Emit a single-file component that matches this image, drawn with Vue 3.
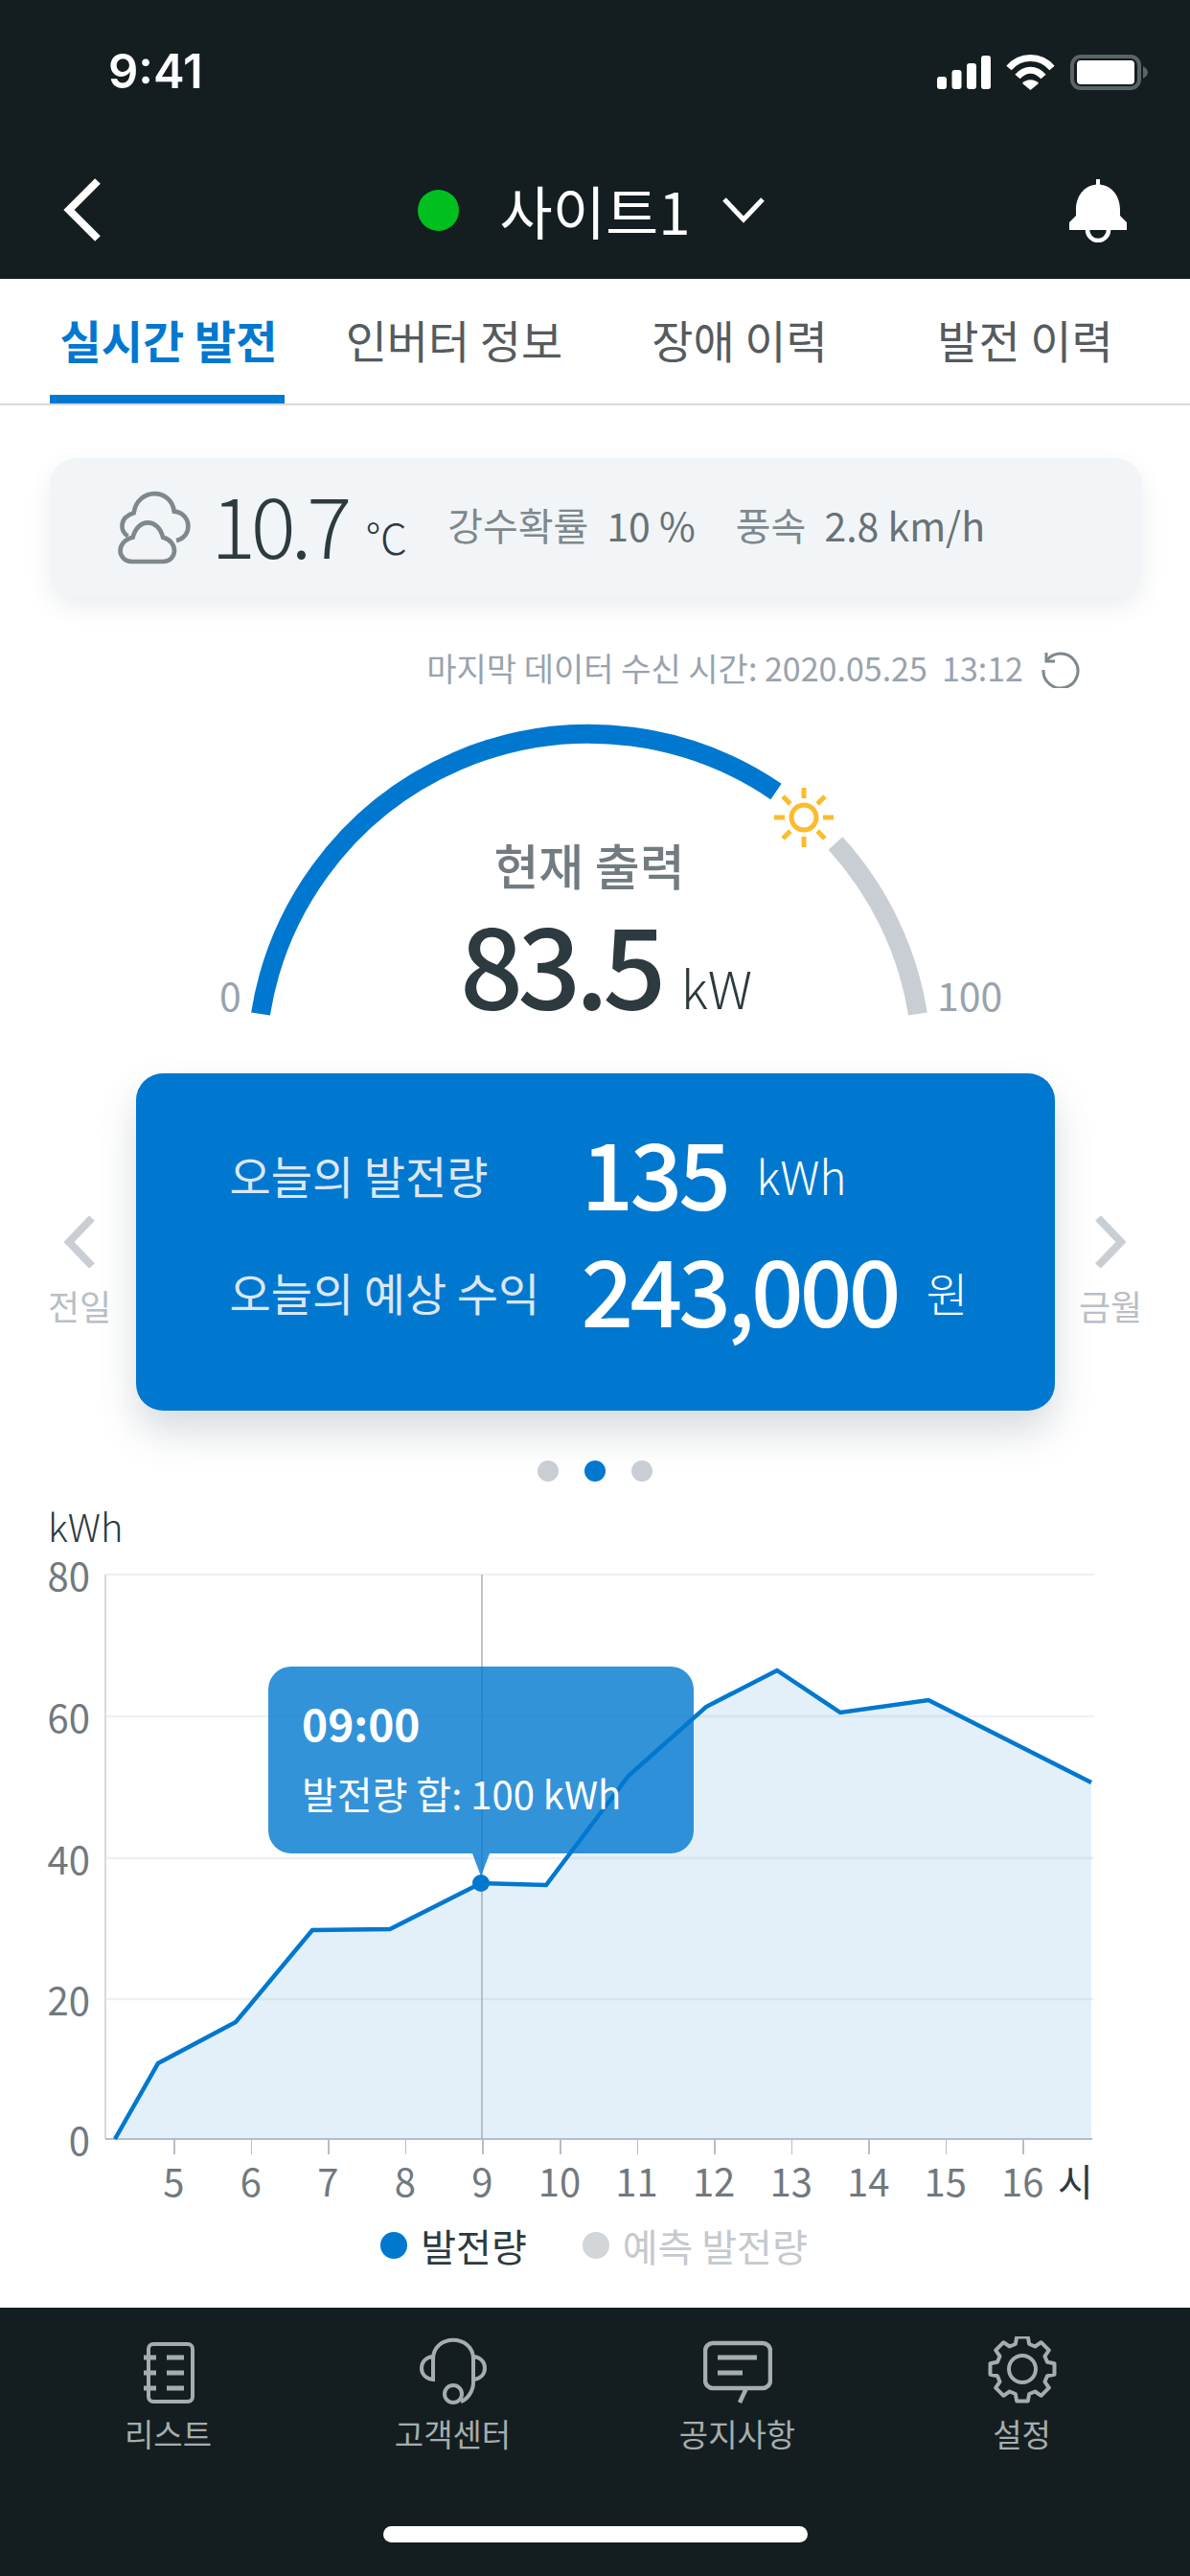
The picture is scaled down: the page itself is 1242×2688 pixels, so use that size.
<script setup>
const tabs = ["실시간 발전", "인버터 정보", "장애 이력", "발전 이력"];

const yTicks = [
  { label: "80", y: 1643 },
  { label: "60", y: 1791 },
  { label: "40", y: 1939 },
  { label: "20", y: 2086 },
];
const xTicks = [5, 6, 7, 8, 9, 10, 11, 12, 13, 14, 15, 16].map((h, i) => ({
  label: h,
  x: 181 + i * 80.55,
}));

const points = [
  [120, 2232], [165, 2153], [246, 2110], [326, 2014], [407, 2013], [502, 1965],
  [570, 1967], [656, 1853], [737, 1781], [811, 1743], [877, 1787], [969, 1774], [1139, 1860],
];
const linePts = points.map((p) => p.join(",")).join(" ");
const areaPts = `${linePts} 1139,2232`;

const sunRays = [0, 45, 90, 135, 180, 225, 270, 315];

// eight toothed gear, centred on 0,0
const gearPath = (() => {
  const pts = [];
  for (let i = 0; i < 8; i++) {
    const a = (i * Math.PI) / 4 - Math.PI / 2;
    [[-0.27, 27], [-0.17, 34], [0.17, 34], [0.27, 27]].forEach(([da, r]) => {
      pts.push(`${(Math.cos(a + da) * r).toFixed(1)} ${(Math.sin(a + da) * r).toFixed(1)}`);
    });
  }
  return `M${pts.join("L")}Z`;
})();
</script>

<template>
  <div class="page">
    <header class="top">
      <div class="status">
        <span class="clock">9:41</span>
        <div class="status_icons">
          <svg width="56" height="36" viewBox="0 0 56 36" fill="#fff">
            <rect x="0" y="22" width="10" height="13" rx="3" />
            <rect x="15.5" y="15" width="10" height="20" rx="3" />
            <rect x="31" y="8" width="10" height="27" rx="3" />
            <rect x="46" y="0" width="10" height="35" rx="3" />
          </svg>
          <svg width="51" height="37" viewBox="0 0 51 37" fill="none" stroke="#fff" stroke-width="7">
            <path d="M3 14C15 0 36 0 48 14" />
            <path d="M12 23C20 14 31 14 39 23" />
            <path d="M17 30C21 25 30 25 34 30L25.5 37Z" fill="#fff" stroke="none" />
          </svg>
          <svg width="81" height="37" viewBox="0 0 81 37">
            <rect x="2" y="2" width="70" height="33" rx="9" fill="none" stroke="#5a6466" stroke-width="4" />
            <rect x="7" y="6" width="60" height="25" rx="4" fill="#fff" />
            <path d="M76 12C79 14 81 16 81 18.500C81 21 79 23 76 25Z" fill="#5a6466" />
          </svg>
        </div>
      </div>
      <div class="nav">
        <svg class="back" width="40" height="66" viewBox="0 0 40 66" fill="none" stroke="#fff" stroke-width="8">
          <path d="M36 3L6 33L36 63" />
        </svg>
        <div class="site">
          <span class="site_dot"></span>
          <span class="site_name">사이트1</span>
          <svg width="44" height="28" viewBox="0 0 44 28" fill="none" stroke="#fff" stroke-width="5">
            <path d="M2 3L22 24L42 3" />
          </svg>
        </div>
        <svg class="bell" width="60" height="66" viewBox="0 0 60 66">
          <path d="M19 53A11 11 0 0 0 41 53" fill="none" stroke="#fff" stroke-width="4.5" />
          <path fill="#fff" d="M28 0H32V5.500C45 7 53 18 53 32V38L60 45V53H0V45L7 38V32C7 18 15 7 28 5.500Z" />
        </svg>
      </div>
    </header>

    <nav class="tabs">
      <a v-for="(tab, i) in tabs" :key="tab" class="tab" :class="{ active: i === 0 }">{{ tab }}</a>
    </nav>

    <main class="content">
      <section class="weather">
        <svg class="cloud" width="78" height="78" viewBox="95 65 235 235" fill="none" stroke="#7f888c" stroke-width="14">
          <path d="M130 208C105 195 100 150 148 135C160 55 265 55 275 130C330 135 335 210 282 222" />
          <path d="M145 288C95 288 90 225 145 212C160 150 225 150 240 212C290 225 285 288 240 288Z" />
        </svg>
        <span class="temp">10.7</span>
        <span class="temp_unit">℃</span>
        <span class="w_label rain">강수확률</span>
        <span class="w_value">10 %</span>
        <span class="w_label wind">풍속</span>
        <span class="w_value">2.8 km/h</span>
      </section>

      <div class="updated">
        <span>마지막 데이터 수신 시간: 2020.05.25&nbsp; 13:12</span>
        <svg width="42" height="42" viewBox="0 0 42 42" fill="none" stroke="#7f888c" stroke-width="3">
          <path d="M6 5V14H15" />
          <path d="M6 14A18 18 0 1 1 3 23" />
        </svg>
      </div>

      <section class="gauge">
        <svg class="gauge_arc" width="1242" height="380" viewBox="0 730 1242 380" fill="none" stroke-width="20">
          <path d="M272 1058A347 347 0 0 1 810 826" stroke="#0078cf" />
          <path d="M872 880A347 347 0 0 1 958 1058" stroke="#c8ced4" />
          <g stroke="#fdbb2d" stroke-width="5">
            <circle cx="839" cy="853" r="13" />
            <line v-for="deg in sunRays" :key="deg" x1="859" y1="853" x2="870" y2="853" :transform="`rotate(${deg} 839 853)`" />
          </g>
        </svg>
        <div class="readout">
          <span class="readout_title">현재 출력</span>
          <div class="readout_value">
            <span class="power">83.5</span>
            <span class="power_unit">kW</span>
          </div>
        </div>
        <span class="gauge_min">0</span>
        <span class="gauge_max">100</span>
      </section>

      <section class="summary">
        <div class="side">
          <svg width="34" height="54" viewBox="0 0 34 54" fill="none" stroke="#c8ced4" stroke-width="8">
            <path d="M30 2L6 27L30 52" />
          </svg>
          <span>전일</span>
        </div>
        <div class="card">
          <div class="card_row">
            <span class="card_label">오늘의 발전량</span>
            <span class="card_num">135</span>
            <span class="card_unit">kWh</span>
          </div>
          <div class="card_row">
            <span class="card_label">오늘의 예상 수익</span>
            <span class="card_num">243,000</span>
            <span class="card_unit">원</span>
          </div>
        </div>
        <div class="side">
          <svg width="34" height="54" viewBox="0 0 34 54" fill="none" stroke="#c8ced4" stroke-width="8">
            <path d="M4 2L28 27L4 52" />
          </svg>
          <span>금월</span>
        </div>
      </section>

      <div class="dots">
        <span class="pager"></span>
        <span class="pager on"></span>
        <span class="pager"></span>
      </div>

      <div class="y_unit">kWh</div>

      <section class="chart">
        <svg width="1242" height="620" viewBox="0 1620 1242 620" class="chart_svg">
          <polygon :points="areaPts" fill="#e3f0fa" />
          <line v-for="t in yTicks" :key="t.label" x1="110" x2="1142" :y1="t.y" :y2="t.y" stroke="#9db0c4" stroke-opacity="0.18" stroke-width="2.5" />
          <line x1="110" x2="110" y1="1643" y2="2232" stroke="#d5dade" stroke-width="2" />
          <line x1="110" x2="1140" y1="2232" y2="2232" stroke="#b4bec8" stroke-width="2" />
          <polyline :points="linePts" fill="none" stroke="#0078cf" stroke-width="4.5" />
          <line x1="503" x2="503" y1="1643" y2="2232" stroke="#a6b0b9" stroke-width="1.5" />
          <circle cx="502" cy="1965" r="9" fill="#0078cf" />
        </svg>
        <span v-for="t in yTicks" :key="t.label" class="y_label" :style="{ top: `${t.y - 1620}px` }">{{ t.label }}</span>
        <span class="y_label" style="top: 612px">0</span>
        <div class="tooltip">
          <strong>09:00</strong>
          <span>발전량 합: 100 kWh</span>
        </div>
      </section>

      <div class="x_axis">
        <div class="x_ticks">
          <span v-for="t in xTicks" :key="t.label" class="x_tick"><i></i>{{ t.label }}</span>
        </div>
        <span class="x_unit">시</span>
      </div>

      <div class="legend">
        <span class="legend_item"><i class="ball blue"></i>발전량</span>
        <span class="legend_item off"><i class="ball grey"></i>예측 발전량</span>
      </div>
    </main>

    <footer class="bottom">
      <div class="bottom_items">
        <a class="item">
          <svg width="60" height="72" viewBox="0 0 60 72" fill="none" stroke="#a6adad" stroke-width="4">
            <rect x="9" y="8" width="46" height="60" rx="5" />
            <g stroke-width="5">
              <path d="M4 22H17M28 22H46M4 38H17M28 38H46M4 54H17M28 54H46" />
            </g>
          </svg>
          <span>리스트</span>
        </a>
        <a class="item">
          <svg width="72" height="72" viewBox="0 0 72 72" fill="none" stroke="#a6adad" stroke-width="4">
            <path d="M15 42V24C15 -3 57 -3 57 24V48C57 58 50 66 44 68" />
            <path d="M15 21C7 22 3 27 3 33C3 39 7 44 15 45Z" />
            <path d="M57 21C65 22 69 27 69 33C69 39 65 44 57 45Z" />
            <circle cx="36" cy="60" r="9" />
          </svg>
          <span>고객센터</span>
        </a>
        <a class="item">
          <svg width="72" height="72" viewBox="0 0 72 72" fill="none" stroke="#a6adad" stroke-width="4.5">
            <path d="M38 69L45 54H62A8 8 0 0 0 70 46V15A8 8 0 0 0 62 7H10A8 8 0 0 0 2 15V46A8 8 0 0 0 10 54H45" />
            <path stroke-width="5" d="M15 22H56M15 38H41" />
          </svg>
          <span>공지사항</span>
        </a>
        <a class="item">
          <svg width="72" height="72" viewBox="-36 -34 72 72" fill="none" stroke="#a6adad" stroke-width="4">
            <path :d="gearPath" stroke-linejoin="round" />
            <circle r="14" />
          </svg>
          <span>설정</span>
        </a>
      </div>
      <div class="home_bar"></div>
    </footer>
  </div>
</template>

<style>
html,
body {
  margin: 0;
  background: #fff;
}
</style>

<style scoped>
.page {
  width: 1242px;
  height: 2688px;
  display: flex;
  flex-direction: column;
  overflow: hidden;
  background: #fff;
  font-family: "Noto Sans CJK KR", "Noto Sans", sans-serif;
  color: #2d3a3f;
}

.top {
  height: 291px;
  box-sizing: border-box;
  flex: none;
  background: #141e20;
  color: #fff;
}

.status {
  height: 150px;
  padding: 54px 44px 0 113px;
  box-sizing: border-box;
  display: flex;
  justify-content: space-between;
  align-items: flex-start;
}

.clock {
  font-family: Inter, sans-serif;
  font-size: 49px;
  line-height: 42px;
  font-weight: 600;
}

.status_icons {
  display: flex;
  gap: 16px;
  align-items: center;
  margin-top: 3px;
}

.nav {
  height: 141px;
  padding: 36px 66px 0 66px;
  box-sizing: border-box;
  display: flex;
  justify-content: space-between;
  align-items: flex-start;
}

.bell {
  margin-top: 1px;
}

.site {
  display: flex;
  align-items: center;
  height: 66px;
  margin-left: 12px;
}

.site_dot {
  width: 43px;
  height: 43px;
  border-radius: 50%;
  background: #00c020;
  margin-right: 43px;
}

.site_name {
  font-size: 60px;
  line-height: 66px;
  margin-right: 34px;
}

.tabs {
  flex: none;
  height: 132px;
  box-sizing: border-box;
  padding: 0 26px;
  display: grid;
  grid-template-columns: repeat(4, 298px);
  border-bottom: 2px solid #d5dade;
}

.tab {
  font-size: 47px;
  line-height: 126px;
  text-align: center;
  color: #555b5e;
  position: relative;
  left: 1px;
}

.tab.active {
  color: #0078cf;
  font-weight: 700;
}

.tab.active::after {
  content: "";
  position: absolute;
  left: 25px;
  right: 28px;
  bottom: 0;
  height: 9px;
  background: #0078cf;
}

.content {
  flex: 1;
  display: flex;
  flex-direction: column;
}

.weather {
  margin: 55px 50px 0 52px;
  height: 145px;
  padding-left: 70px;
  border-radius: 28px;
  background: #f1f5f8;
  box-shadow: 0 10px 24px rgba(60, 80, 100, 0.1);
  display: flex;
  align-items: center;
}

.temp {
  font-size: 88px;
  font-weight: 200;
  margin: -12px 0 0 20px;
  line-height: 100px;
  letter-spacing: -0.06em;
}

.temp_unit {
  font-size: 44px;
  font-weight: 200;
  margin: 18px 0 0 19px;
}

.w_label {
  font-size: 40px;
  color: #7f888c;
  margin-top: -8px;
}

.w_value {
  font-size: 41px;
  color: #697276;
  margin: -8px 0 0 19px;
}

.rain {
  margin-left: 42px;
}

.wind {
  margin-left: 42px;
}

.updated {
  margin: 54px 114px 0 0;
  height: 39px;
  display: flex;
  justify-content: flex-end;
  align-items: center;
  gap: 18px;
  font-size: 34px;
  color: #98a3ae;
}

.gauge {
  position: relative;
  height: 380px;
  margin-top: 14px;
}

.gauge_arc {
  display: block;
}

.readout {
  position: absolute;
  left: 0;
  right: 12px;
  top: 140px;
  display: flex;
  flex-direction: column;
  align-items: center;
}

.readout_title {
  font-size: 51px;
  line-height: 64px;
  font-weight: 500;
  color: #727b80;
}

.readout_value {
  display: flex;
  align-items: baseline;
  gap: 21px;
  margin-left: 35px;
}

.power {
  font-size: 116px;
  line-height: 136px;
  font-weight: 500;
  letter-spacing: -0.05em;
  color: #2d3a3f;
}

.power_unit {
  font-size: 54px;
  font-weight: 200;
}

.gauge_min,
.gauge_max {
  position: absolute;
  top: 282px;
  font-size: 41px;
  line-height: 50px;
  color: #98a3ae;
}

.gauge_min {
  left: 229px;
}

.gauge_max {
  left: 978px;
}

.summary {
  margin-top: 10px;
  height: 352px;
  padding: 0 50px;
  display: flex;
  justify-content: space-between;
  align-items: center;
}

.side {
  width: 66px;
  margin-top: 62px;
  display: flex;
  flex-direction: column;
  align-items: center;
  gap: 16px;
  font-size: 36px;
  line-height: 46px;
  color: #b8bfc6;
  white-space: nowrap;
}

.card {
  width: 959px;
  height: 352px;
  box-sizing: border-box;
  padding: 41px 0 0 98px;
  border-radius: 28px;
  background: #0078cf;
  box-shadow: 0 22px 40px rgba(60, 80, 100, 0.2);
}

.card_row {
  height: 122px;
  display: flex;
  align-items: center;
  color: #dce6f2;
}

.card_label {
  font-size: 47px;
  width: 367px;
  margin-top: 6px;
  white-space: nowrap;
}

.card_num {
  font-size: 96px;
  line-height: 122px;
  font-weight: 500;
  letter-spacing: -0.04em;
  color: #fff;
}

.card_unit {
  font-size: 48px;
  font-weight: 200;
  margin: 8px 0 0 30px;
  color: #fff;
}

.dots {
  height: 22px;
  margin-top: 52px;
  display: flex;
  justify-content: center;
  gap: 27px;
}

.pager {
  width: 22px;
  height: 22px;
  border-radius: 50%;
  background: #c8ced4;
}

.pager.on {
  background: #0078cf;
}

.y_unit {
  margin: 23px 0 0 50px;
  height: 52px;
  font-size: 40px;
  line-height: 47px;
  font-weight: 300;
}

.chart {
  position: relative;
  height: 620px;
  margin-top: -1px;
}

.chart_svg {
  display: block;
}

.y_label {
  position: absolute;
  right: 1148px;
  font-size: 40px;
  line-height: 40px;
  color: #71797f;
  transform: translateY(-20px);
}

.tooltip {
  position: absolute;
  left: 280px;
  top: 119px;
  width: 444px;
  height: 195px;
  box-sizing: border-box;
  padding: 30px 35px;
  border-radius: 24px;
  background: rgba(0, 120, 207, 0.8);
  color: #fff;
  display: flex;
  flex-direction: column;
  gap: 21px;
  font-size: 40px;
  line-height: 50px;
  white-space: nowrap;
}

.tooltip strong {
  font-size: 46px;
  line-height: 56px;
  font-weight: 700;
}

.tooltip::after {
  content: "";
  position: absolute;
  left: 213px;
  top: 100%;
  border-left: 9px solid transparent;
  border-right: 9px solid transparent;
  border-top: 24px solid rgba(0, 120, 207, 0.8);
}

.x_axis {
  position: relative;
  height: 70px;
  margin-top: -8px;
}

.x_ticks {
  position: absolute;
  left: 141px;
  display: grid;
  grid-template-columns: repeat(12, 80.55px);
}

.x_tick {
  position: relative;
  text-align: center;
  padding-top: 18px;
  font-size: 40px;
  line-height: 50px;
  color: #71797f;
}

.x_tick i {
  position: absolute;
  left: 50%;
  top: 0;
  width: 1.5px;
  height: 16px;
  background: #b4bec8;
}

.x_unit {
  position: absolute;
  left: 1104px;
  top: 18px;
  font-size: 40px;
  line-height: 50px;
}

.legend {
  margin-top: 15px;
  display: flex;
  justify-content: center;
  gap: 58px;
  padding-right: 2px;
}

.legend_item {
  display: flex;
  align-items: center;
  gap: 14px;
  font-size: 40px;
  line-height: 52px;
  color: #2d3a3f;
}

.legend_item.off {
  color: #c4c9ce;
}

.ball {
  width: 28px;
  height: 28px;
  border-radius: 50%;
}

.ball.blue {
  background: #0078cf;
}

.ball.grey {
  background: #d2d6d9;
}

.bottom {
  flex: none;
  height: 280px;
  box-sizing: border-box;
  padding-top: 30px;
  background: #141e20;
  position: relative;
}

.bottom_items {
  display: grid;
  grid-template-columns: repeat(4, 297px);
  padding-left: 27px;
}

.item {
  display: flex;
  flex-direction: column;
  align-items: center;
  gap: 6px;
  font-size: 33px;
  line-height: 46px;
  color: #a6adad;
}

.home_bar {
  position: absolute;
  left: 400px;
  top: 228px;
  width: 443px;
  height: 17px;
  border-radius: 9px;
  background: #fff;
}
</style>
